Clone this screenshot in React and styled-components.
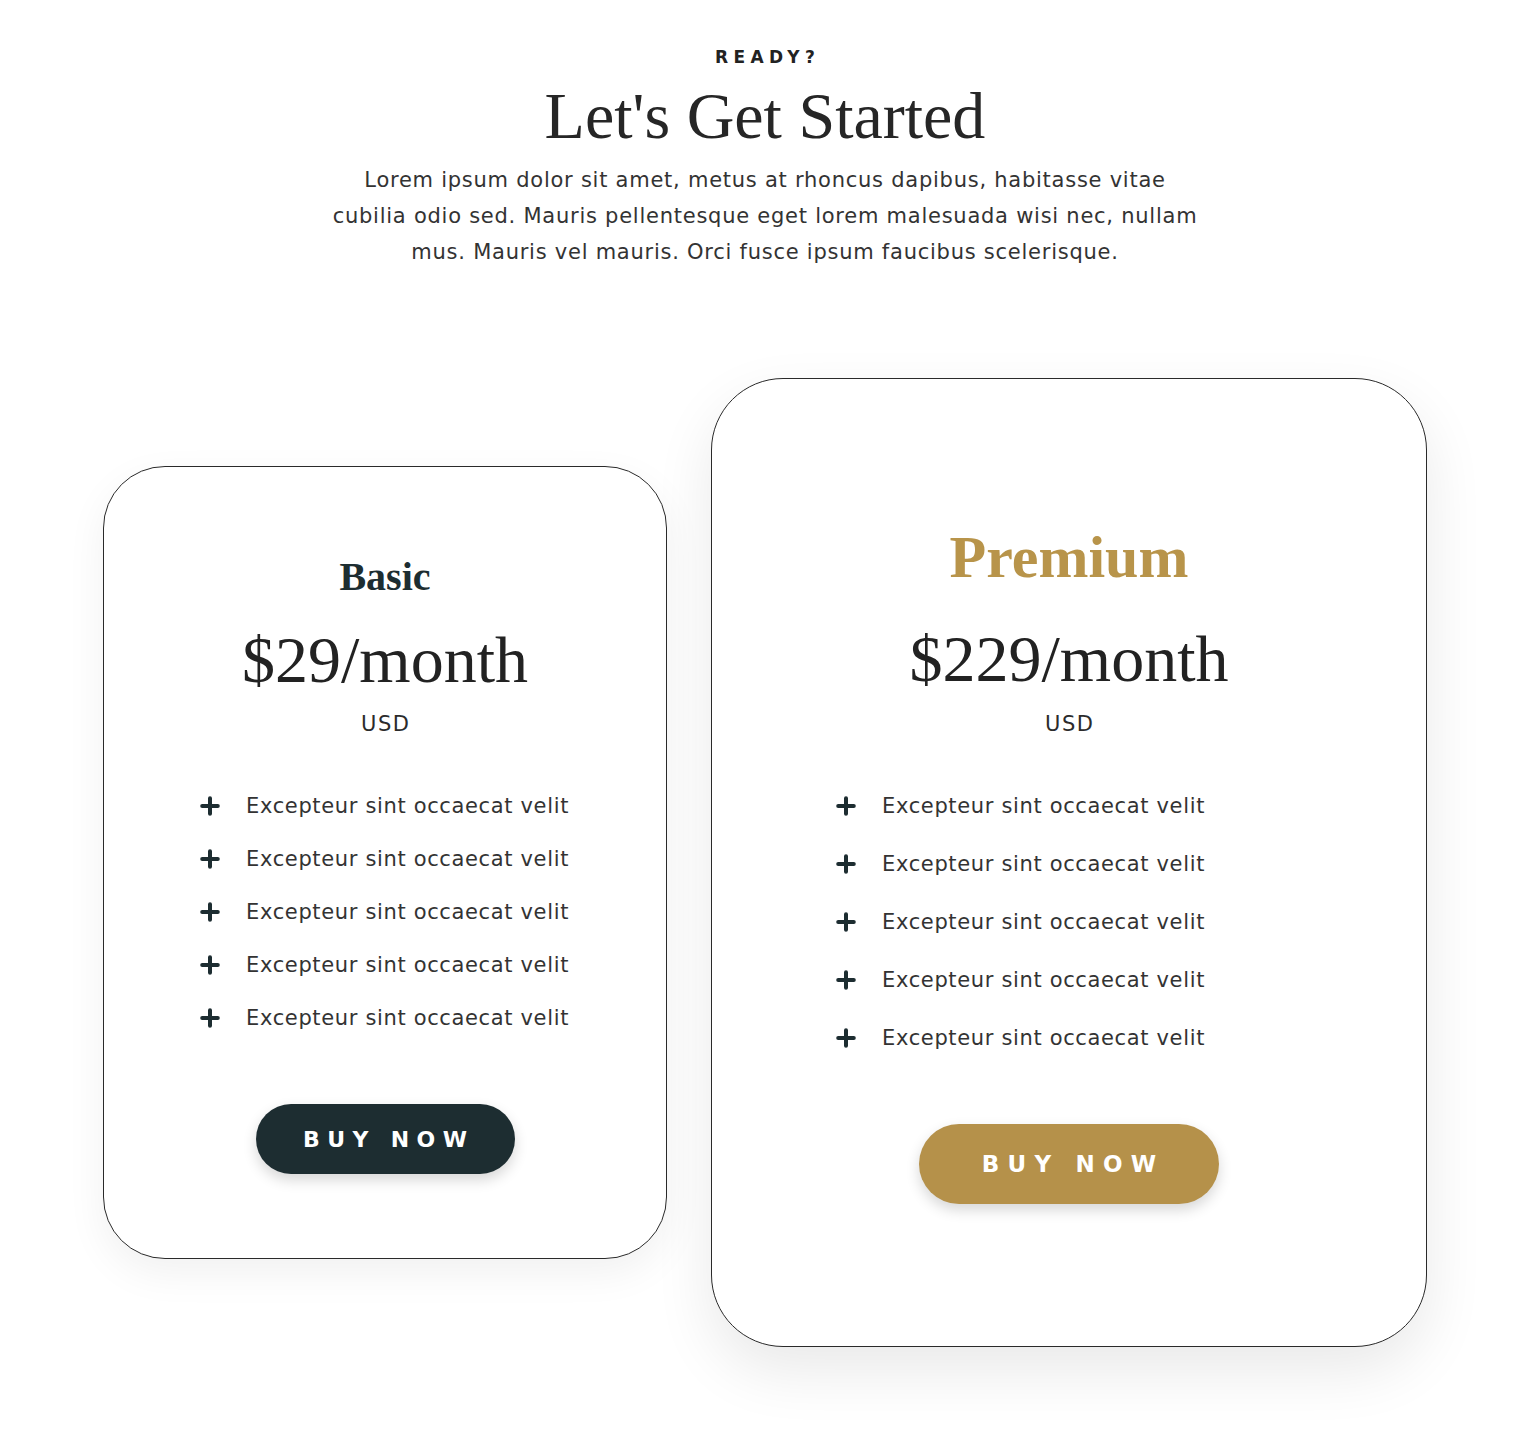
import React from 'react'
import styled, { createGlobalStyle } from 'styled-components'

const GlobalStyle = createGlobalStyle`
  html, body {
    margin: 0;
    padding: 0;
    background: #ffffff;
  }
  body {
    font-family: "DejaVu Sans", "Open Sans", sans-serif;
    color: #2b2b2b;
  }
`;

const SERIF = `"Liberation Serif", "DejaVu Serif", serif`;
const SANS = `"DejaVu Sans", "Open Sans", sans-serif`;

const Page = styled.main`
  width: 1534px;
  min-height: 1440px;
  display: flex;
  flex-flow: column;
  align-items: center;
  padding: 46px 4px 0 0;
  box-sizing: border-box;
`;

const Eyebrow = styled.div`
  font-family: ${SANS};
  font-weight: 700;
  font-size: 17px;
  line-height: 22px;
  letter-spacing: 5.4px;
  padding-left: 5.4px;
  color: #222;
  text-transform: uppercase;
`;

const Title = styled.h1`
  margin: 10px 0 0;
  font-family: ${SERIF};
  font-weight: 400;
  font-size: 66px;
  line-height: 76px;
  color: #262626;
`;

const Intro = styled.p`
  margin: 8px 0 0;
  font-family: ${SANS};
  font-size: 21px;
  line-height: 36px;
  letter-spacing: 0.75px;
  text-align: center;
  color: #333;
`;

const Cards = styled.section`
  margin-top: 108px;
  display: flex;
  align-items: center;
  gap: 44px;
`;

const Card = styled.article`
  width: ${({ $w }) => $w}px;
  box-sizing: border-box;
  border: 1px solid #2a2a2a;
  border-radius: ${({ $radius }) => $radius}px;
  background: #fff;
  padding: ${({ $top }) => $top}px 0 ${({ $bottom }) => $bottom}px;
  box-shadow: ${({ $featured }) => $featured
    ? '0 24px 60px rgba(0, 0, 0, 0.09)'
    : '0 14px 40px rgba(0, 0, 0, 0.06)'};
  display: flex;
  flex-flow: column;
  align-items: center;
`;

const PlanName = styled.h2`
  margin: 0;
  font-family: ${SERIF};
  font-weight: 700;
  font-size: ${({ $size }) => $size}px;
  line-height: ${({ $lh }) => $lh}px;
  color: ${({ $color }) => $color};
`;

const Price = styled.div`
  margin-top: ${({ $mt }) => $mt}px;
  font-family: ${SERIF};
  font-size: ${({ $size }) => $size}px;
  line-height: ${({ $lh }) => $lh}px;
  color: #222;
`;

const Currency = styled.div`
  margin-top: ${({ $mt }) => $mt}px;
  font-family: ${SANS};
  font-size: 21px;
  line-height: 30px;
  letter-spacing: 1.5px;
  padding-left: 1.5px;
  color: #2b2b2b;
`;

const Features = styled.ul`
  list-style: none;
  align-self: stretch;
  margin: ${({ $mt }) => $mt}px 0 0;
  padding: 0 0 0 ${({ $indent }) => $indent}px;
`;

const Feature = styled.li`
  height: ${({ $h }) => $h}px;
  display: flex;
  align-items: center;
  gap: 26px;
  font-family: ${SANS};
  font-size: 21px;
  letter-spacing: 0.65px;
  color: #333;

  svg {
    flex: none;
  }
`;

const BuyButton = styled.button`
  margin-top: ${({ $mt }) => $mt}px;
  width: ${({ $w }) => $w}px;
  height: ${({ $h }) => $h}px;
  border: none;
  border-radius: 999px;
  background: ${({ $bg }) => $bg};
  color: #fff;
  font-family: ${SANS};
  font-weight: 700;
  font-size: ${({ $size }) => $size}px;
  letter-spacing: ${({ $ls }) => $ls}px;
  padding: 0 0 0 ${({ $ls }) => $ls}px;
  box-shadow: 0 6px 14px rgba(0, 0, 0, 0.16);
  cursor: pointer;
`;

const Plus = () => (
  <svg width="20" height="20" viewBox="0 0 20 20" aria-hidden="true">
    <path d="M10 2.2v15.6M2.2 10h15.6" stroke="#1d2d31" strokeWidth="4" strokeLinecap="round" />
  </svg>
)

const plans = [
  {
    name: 'Basic',
    price: '$29/month',
    w: 564, radius: 62, top: 85, bottom: 84,
    nameSize: 40, nameLh: 50, nameColor: '#1d2d31',
    priceSize: 66, priceLh: 80, priceMt: 18,
    usdMt: 9,
    listMt: 40, indent: 96, rowH: 53,
    btn: { mt: 60, w: 259, h: 70, bg: '#1d2d31', size: 22, ls: 7.4 },
  },
  {
    name: 'Premium',
    price: '$229/month',
    w: 716, radius: 72, top: 143, bottom: 142,
    nameSize: 60, nameLh: 70, nameColor: '#b8944a',
    priceSize: 66, priceLh: 84, priceMt: 25,
    usdMt: 8,
    listMt: 38, indent: 124, rowH: 58,
    btn: { mt: 57, w: 300, h: 80, bg: '#b5914a', size: 23, ls: 8.2 },
    featured: true,
  },
]

const features = Array(5).fill('Excepteur sint occaecat velit')

const PlanCard = ({ plan }) => (
  <Card $w={plan.w} $radius={plan.radius} $top={plan.top} $bottom={plan.bottom} $featured={plan.featured}>
    <PlanName $size={plan.nameSize} $lh={plan.nameLh} $color={plan.nameColor}>{plan.name}</PlanName>
    <Price $size={plan.priceSize} $lh={plan.priceLh} $mt={plan.priceMt}>{plan.price}</Price>
    <Currency $mt={plan.usdMt}>USD</Currency>
    <Features $mt={plan.listMt} $indent={plan.indent}>
      {features.map((f, i) => (
        <Feature key={i} $h={plan.rowH}>
          <Plus />
          {f}
        </Feature>
      ))}
    </Features>
    <BuyButton
      $mt={plan.btn.mt}
      $w={plan.btn.w}
      $h={plan.btn.h}
      $bg={plan.btn.bg}
      $size={plan.btn.size}
      $ls={plan.btn.ls}
    >
      BUY NOW
    </BuyButton>
  </Card>
)

const App = () => (
  <>
    <GlobalStyle />
    <Page>
      <Eyebrow>Ready?</Eyebrow>
      <Title>Let's Get Started</Title>
      <Intro>
        Lorem ipsum dolor sit amet, metus at rhoncus dapibus, habitasse vitae<br />
        cubilia odio sed. Mauris pellentesque eget lorem malesuada wisi nec, nullam<br />
        mus. Mauris vel mauris. Orci fusce ipsum faucibus scelerisque.
      </Intro>
      <Cards>
        {plans.map(p => <PlanCard key={p.name} plan={p} />)}
      </Cards>
    </Page>
  </>
)

export default App
